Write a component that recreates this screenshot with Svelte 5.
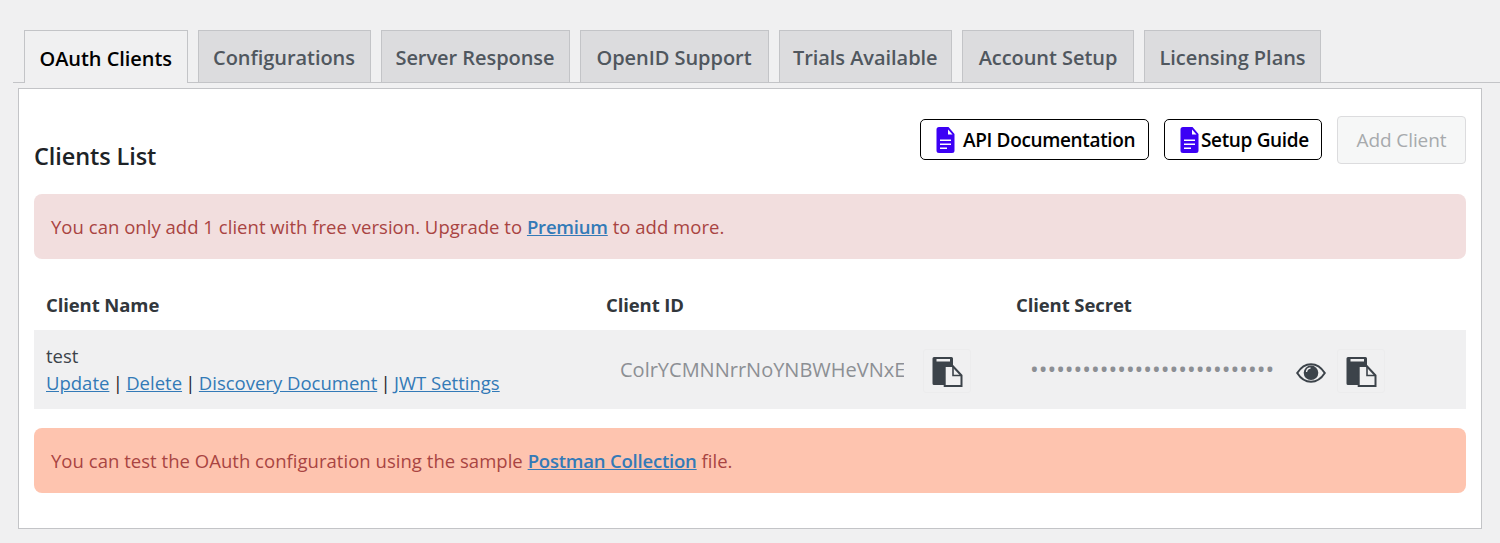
<script>
  let tabs = [
    "OAuth Clients",
    "Configurations",
    "Server Response",
    "OpenID Support",
    "Trials Available",
    "Account Setup",
    "Licensing Plans",
  ];
</script>

<div class="page">
  <nav class="tabs">
    {#each tabs as tab, i}
      <a href="#tab" class="tab" class:active={i === 0}>{tab}</a>
    {/each}
  </nav>

  <main class="panel">
    <div class="head">
      <h2>Clients List</h2>
      <div class="actions">
        <button class="doc-btn api">
          <svg class="doc" viewBox="0 0 18 26"><use href="#doc-icon" /></svg>
          <span>API Documentation</span>
        </button>
        <button class="doc-btn guide">
          <svg class="doc" viewBox="0 0 18 26"><use href="#doc-icon" /></svg>
          <span>Setup Guide</span>
        </button>
        <button class="add" disabled>Add Client</button>
      </div>
    </div>

    <div class="notice danger">
      You can only add 1 client with free version. Upgrade to <a href="#premium">Premium</a> to add more.
    </div>

    <div class="table">
      <div class="cols labels">
        <div>Client Name</div>
        <div>Client ID</div>
        <div>Client Secret</div>
      </div>
      <div class="cols row">
        <div class="name">
          <div>test</div>
          <div class="links">
            <a href="#u">Update</a> <span class="sep">|</span> <a href="#d">Delete</a> <span class="sep">|</span> <a href="#doc">Discovery Document</a> <span class="sep">|</span> <a href="#jwt">JWT Settings</a>
          </div>
        </div>
        <div class="id-cell">
          <input class="field id" value="ColrYCMNNrrNoYNBWHeVNxEq" readonly />
          <button class="copy" aria-label="Copy client id">
            <svg viewBox="0 0 32 32" width="32" height="32"><use href="#copy-icon" /></svg>
          </button>
        </div>
        <div class="secret-cell">
          <input class="field secret" type="password" value="abcdefghijklmnopqrstuvwxyz0123456789" readonly />
          <svg class="eye" viewBox="0 0 30 20" width="30" height="20">
            <path fill="none" stroke="#3c434a" stroke-width="2" d="M1.200 10C5 4 9.500 1.200 15 1.200S25 4 28.800 10C25 16 20.500 18.800 15 18.800S5 16 1.200 10z"/>
            <circle cx="15" cy="9.800" r="7.300" fill="#3c434a"/>
            <path fill="none" stroke="#f0f0f1" stroke-width="1.300" d="M10.500 9a4.500 4.500 0 0 1 4-4"/>
          </svg>
          <button class="copy" aria-label="Copy client secret">
            <svg viewBox="0 0 32 32" width="32" height="32"><use href="#copy-icon" /></svg>
          </button>
        </div>
      </div>
    </div>

    <div class="notice postman">
      You can test the OAuth configuration using the sample <a href="#postman">Postman Collection</a> file.
    </div>
  </main>

  <svg width="0" height="0" class="defs">
    <defs>
      <g id="copy-icon" transform="translate(0 1)">
        <path fill="#3c434a" d="M1.500 2.500A1.500 1.500 0 0 1 3 1h17.500A1.500 1.500 0 0 1 22 2.500V9H13v20H3a1.500 1.500 0 0 1-1.500-1.500z"/>
        <path fill="#f0f0f1" d="M5.500 3h13.500v2.500H5.500z"/>
        <path fill="#f0f0f1" stroke="#3c434a" stroke-width="2" d="M13.700 10h8l8.800 9.500v10.500H13.700z"/>
        <path fill="none" stroke="#3c434a" stroke-width="1.600" d="M22 10v9.500h8"/>
      </g>
      <g id="doc-icon">
        <path fill="#3c00f5" d="M2.500 0H12l6 7v16.500a2.500 2.500 0 0 1-2.500 2.500h-13A2.500 2.500 0 0 1 0 23.500v-21A2.500 2.500 0 0 1 2.500 0z"/>
        <path fill="#fff" d="M11.500 2.500 16 7.500h-4.500z"/>
        <path fill="#fff" d="M3.500 12.500h11v1.500h-11zM3.500 16.500h11v1.500h-11zM3.500 20.500h7v1.500h-7z"/>
      </g>
    </defs>
  </svg>
</div>

<style>
  :global(body) {
    margin: 0;
    background: #f0f0f1;
    font-family: "Open Sans", "Noto Sans", sans-serif;
    color: #3c434a;
  }

  .page {
    height: 543px;
    overflow: hidden;
  }

  /* Pestanas */
  .tabs {
    display: grid;
    grid-template-columns: 163.500px 173px 189px 189px 173.500px 172px 177px;
    gap: 10px;
    margin: 30px 0 0 13px;
    padding-left: 11px;
    height: 52px;
    border-bottom: 1px solid #c3c4c7;
  }

  .tab {
    height: 52px;
    box-sizing: border-box;
    padding-top: 2px;
    display: flex;
    align-items: center;
    justify-content: center;
    font-size: 20px;
    font-weight: 600;
    letter-spacing: -0.05px;
    white-space: nowrap;
    text-decoration: none;
    color: #50575e;
    background: #dcdcde;
    border: 1px solid #c3c4c7;
    border-bottom: 0;
  }

  .tab.active {
    height: 53px;
    color: #000;
    background: #f0f0f1;
  }

  /* Panel */
  .panel {
    box-sizing: border-box;
    width: 1464px;
    height: 441px;
    margin: 5px 0 0 18px;
    padding: 27px 15px 0;
    background: #fff;
    border: 1px solid #c3c4c7;
  }

  .head {
    display: flex;
    justify-content: space-between;
    align-items: flex-end;
    height: 54px;
  }

  h2 {
    margin: 0;
    font-size: 23.500px;
    font-weight: 600;
    color: #1d2327;
    letter-spacing: -0.1px;
    line-height: 28px;
  }

  .actions {
    display: flex;
    align-self: flex-start;
    align-items: flex-start;
    gap: 15px;
  }

  .doc-btn {
    display: flex;
    align-items: center;
    box-sizing: border-box;
    height: 41px;
    margin-top: 3px;
    padding: 0 0 0 15px;
    font: 600 19px "Open Sans", "Noto Sans", sans-serif;
    letter-spacing: -0.35px;
    color: #000;
    background: #fff;
    border: 1px solid #000;
    border-radius: 5px;
  }

  .api {
    gap: 8px;
    width: 229px;
  }

  .guide {
    gap: 2px;
    width: 158px;
  }

  .doc {
    width: 19px;
    height: 26px;
    flex: none;
  }

  .add {
    box-sizing: border-box;
    width: 129px;
    height: 48px;
    font: 400 19px "Open Sans", "Noto Sans", sans-serif;
    letter-spacing: -0.1px;
    color: #a7aaad;
    background: #f6f7f7;
    border: 1px solid #dcdcde;
    border-radius: 4px;
  }

  /* Avisos */
  .notice {
    height: 65px;
    box-sizing: border-box;
    padding: 0 17px;
    display: flex;
    align-items: center;
    white-space: pre-wrap;
    font-size: 18.500px;
    letter-spacing: 0.03px;
    color: #a94442;
    border-radius: 8px;
  }

  .notice a {
    font-weight: 600;
    letter-spacing: -0.2px;
    color: #337ab7;
  }

  .danger {
    margin-top: 24px;
    background: #f2dede;
  }

  .postman {
    margin-top: 19px;
    background: #fec4af;
  }

  /* Tabla */
  .table {
    margin-top: 25px;
  }

  .cols {
    display: grid;
    grid-template-columns: 560px 410px 1fr;
    padding-left: 12px;
  }

  .labels {
    height: 46px;
    box-sizing: border-box;
    padding-bottom: 6px;
    align-items: center;
    font-size: 18.500px;
    font-weight: 700;
    letter-spacing: -0.1px;
    color: #32373c;
  }

  .row {
    height: 79px;
    background: #f0f0f1;
    align-items: center;
    font-size: 18.500px;
  }

  .name {
    line-height: 27px;
    padding-bottom: 2px;
  }

  .links a {
    color: #337ab7;
  }

  .sep {
    margin: 0 -1.500px;
    color: #1d2327;
  }

  .id-cell,
  .secret-cell {
    display: flex;
    align-items: center;
  }

  .field {
    box-sizing: border-box;
    height: 44px;
    padding: 0 0 0 14px;
    border: 0;
    outline: 0;
    background: transparent;
    font: 400 20px "Open Sans", "Noto Sans", sans-serif;
    color: #8c8f94;
  }

  .id {
    width: 298px;
    margin-right: 19px;
  }

  .secret {
    width: 257px;
    padding-bottom: 2px;
    font-size: 23.200px;
    margin-right: 23px;
  }

  .copy {
    box-sizing: border-box;
    width: 48px;
    height: 44px;
    margin-top: 3px;
    padding: 0;
    display: flex;
    align-items: center;
    justify-content: center;
    background: #f0f0f1;
    border: 1px solid #ececed;
    border-radius: 3px;
  }

  .eye {
    margin: 7px 11px 0 0;
    flex: none;
  }

  .defs {
    position: absolute;
  }
</style>
